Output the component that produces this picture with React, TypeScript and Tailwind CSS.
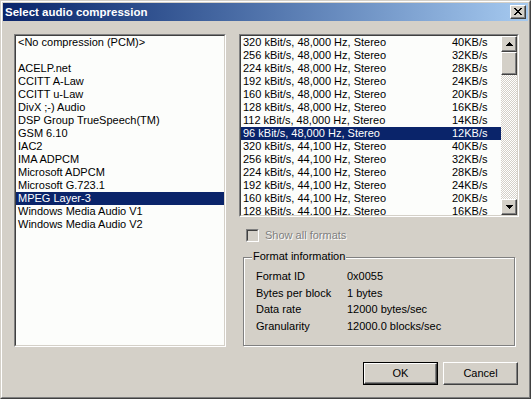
const codecs = [
  "<No compression (PCM)>",
  "",
  "ACELP.net",
  "CCITT A-Law",
  "CCITT u-Law",
  "DivX ;-) Audio",
  "DSP Group TrueSpeech(TM)",
  "GSM 6.10",
  "IAC2",
  "IMA ADPCM",
  "Microsoft ADPCM",
  "Microsoft G.723.1",
  "MPEG Layer-3",
  "Windows Media Audio V1",
  "Windows Media Audio V2",
];

const formats: [string, string][] = [
  ["320 kBit/s, 48,000 Hz, Stereo", "40KB/s"],
  ["256 kBit/s, 48,000 Hz, Stereo", "32KB/s"],
  ["224 kBit/s, 48,000 Hz, Stereo", "28KB/s"],
  ["192 kBit/s, 48,000 Hz, Stereo", "24KB/s"],
  ["160 kBit/s, 48,000 Hz, Stereo", "20KB/s"],
  ["128 kBit/s, 48,000 Hz, Stereo", "16KB/s"],
  ["112 kBit/s, 48,000 Hz, Stereo", "14KB/s"],
  ["96 kBit/s, 48,000 Hz, Stereo", "12KB/s"],
  ["320 kBit/s, 44,100 Hz, Stereo", "40KB/s"],
  ["256 kBit/s, 44,100 Hz, Stereo", "32KB/s"],
  ["224 kBit/s, 44,100 Hz, Stereo", "28KB/s"],
  ["192 kBit/s, 44,100 Hz, Stereo", "24KB/s"],
  ["160 kBit/s, 44,100 Hz, Stereo", "20KB/s"],
  ["128 kBit/s, 44,100 Hz, Stereo", "16KB/s"],
];

const info: [string, string][] = [
  ["Format ID", "0x0055"],
  ["Bytes per block", "1 bytes"],
  ["Data rate", "12000 bytes/sec"],
  ["Granularity", "12000.0 blocks/sec"],
];

// win2000 style raised edge
const raised =
  "border border-t-white border-l-white border-r-[#404040] border-b-[#404040] shadow-[inset_-1px_-1px_0_#808080] bg-[#d4d0c8]";

function Sunken({ className, children }: { className?: string; children: React.ReactNode }) {
  return (
    <div className={`border border-t-[#808080] border-l-[#808080] border-r-white border-b-white ${className ?? ""}`}>
      <div className="h-full border border-t-[#404040] border-l-[#404040] border-r-[#d4d0c8] border-b-[#d4d0c8] bg-[#fcfdfb] overflow-hidden">
        {children}
      </div>
    </div>
  );
}

function Arrow({ down }: { down?: boolean }) {
  return (
    <svg width="7" height="4" viewBox="0 0 7 4" shapeRendering="crispEdges">
      {down ? (
        <>
          <rect x="0" y="0" width="7" height="1" fill="#000" />
          <rect x="1" y="1" width="5" height="1" fill="#000" />
          <rect x="2" y="2" width="3" height="1" fill="#000" />
          <rect x="3" y="3" width="1" height="1" fill="#000" />
        </>
      ) : (
        <>
          <rect x="3" y="0" width="1" height="1" fill="#000" />
          <rect x="2" y="1" width="3" height="1" fill="#000" />
          <rect x="1" y="2" width="5" height="1" fill="#000" />
          <rect x="0" y="3" width="7" height="1" fill="#000" />
        </>
      )}
    </svg>
  );
}

function CloseGlyph() {
  const rows = ["11000011", "01100110", "00111100", "00011000", "00111100", "01100110", "11000011"];
  return (
    <svg width="8" height="7" viewBox="0 0 8 7" shapeRendering="crispEdges">
      {rows.map((r, y) =>
        r.split("").map((c, x) => (c === "1" ? <rect key={`${x}-${y}`} x={x} y={y} width="1" height="1" fill="#000" /> : null))
      )}
    </svg>
  );
}

export default function App() {
  return (
    <div className="w-[531px] h-[399px] bg-[#d4d0c8] border border-t-[#d4d0c8] border-l-[#d4d0c8] border-r-[#404040] border-b-[#404040] text-[11px] leading-[13px] text-black font-['Liberation_Sans',Arial,sans-serif]">
      <div className="h-full border border-t-white border-l-white border-r-[#808080] border-b-[#808080] p-[1px] flex flex-col">
        {/* Title bar */}
        <div className="h-[18px] flex items-center justify-between pl-[2px] pr-[2px] bg-linear-to-r from-[#0a246a] to-[#a6caf0]">
          <span className="text-white font-bold text-[11.5px] leading-[18px]">Select audio compression</span>
          <div className={`w-[16px] h-[14px] flex items-center justify-center pb-[1px] ${raised}`}>
            <CloseGlyph />
          </div>
        </div>

        {/* Body */}
        <div className="flex flex-col pl-[11px] pr-[9px] pt-[13px]">
          <div className="flex gap-[13px]">
            <Sunken className="w-[212px] h-[313px]">
              {codecs.map((c, i) => (
                <div
                  key={i}
                  className={`h-[13px] pl-[2px] whitespace-pre ${c === "MPEG Layer-3" ? "bg-[#0a246a] text-white" : ""}`}
                >
                  {c}
                </div>
              ))}
            </Sunken>

            <div className="w-[280px] flex flex-col">
              <Sunken className="h-[183px]">
                <div className="flex h-full">
                  <div className="flex-1 overflow-hidden">
                    {formats.map(([f, r], i) => (
                      <div
                        key={i}
                        className={`h-[13px] flex pl-[2px] whitespace-nowrap ${i === 7 ? "bg-[#0a246a] text-white" : ""}`}
                      >
                        <span className="w-[209px]">{f}</span>
                        <span>{r}</span>
                      </div>
                    ))}
                  </div>
                  <div className="w-[16px] flex flex-col">
                    <div className={`h-[16px] flex items-center justify-center ${raised}`}>
                      <Arrow />
                    </div>
                    <div className={`h-[23px] ${raised}`} />
                    <div className="flex-1 bg-[repeating-conic-gradient(#d4d0c8_0%_25%,#ffffff_0%_50%)] bg-[length:2px_2px]" />
                    <div className={`h-[16px] flex items-center justify-center ${raised}`}>
                      <Arrow down />
                    </div>
                  </div>
                </div>
              </Sunken>

              <div className="mt-[12px] pl-[7px] flex items-center h-[13px]">
                <div className="w-[13px] h-[13px] border border-t-[#808080] border-l-[#808080] border-r-white border-b-white">
                  <div className="h-full border border-t-[#404040] border-l-[#404040] border-r-[#d4d0c8] border-b-[#d4d0c8] bg-[#d4d0c8]" />
                </div>
                <span className="ml-[6px] text-[#808080] [text-shadow:1px_1px_0_#fff]">Show all formats</span>
              </div>

              <div className="relative mt-[15px] ml-[4px] w-[272px] h-[89px] border border-[#808080] shadow-[inset_1px_1px_0_#fff,1px_1px_0_#fff] pt-[10px] pl-[12px]">
                <span className="absolute left-[8px] top-[-8px] px-[1px] bg-[#d4d0c8]">Format information</span>
                {info.map(([k, v]) => (
                  <div key={k} className="flex h-[16.5px] leading-[16.5px]">
                    <span className="w-[91px]">{k}</span>
                    <span>{v}</span>
                  </div>
                ))}
              </div>
            </div>
          </div>

          {/* Buttons */}
          <div className="flex justify-end gap-[5px] mt-[15px] pr-[1px]">
            <div className="w-[75px] h-[23px] border border-black">
              <div className={`h-full flex items-center justify-center ${raised}`}>OK</div>
            </div>
            <div className={`w-[75px] h-[23px] flex items-center justify-center ${raised}`}>Cancel</div>
          </div>
        </div>
      </div>
    </div>
  );
}
